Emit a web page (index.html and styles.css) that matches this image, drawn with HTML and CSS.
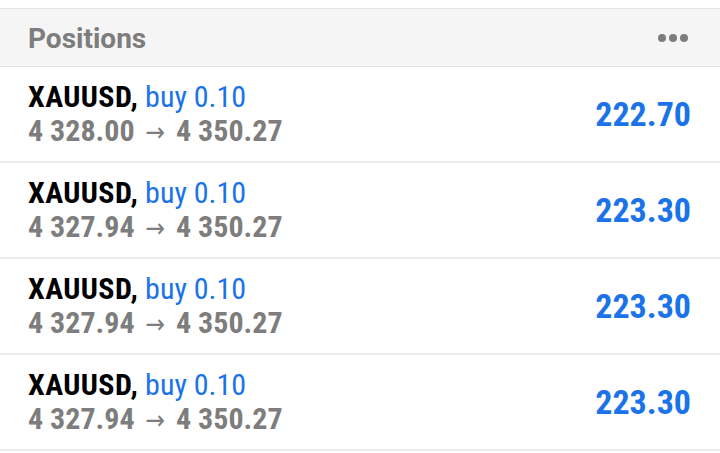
FILE: index.html
```html
<!DOCTYPE html>
<html>
<head>
    <title>Positions</title>
    <link rel="stylesheet" href="styles.css">
</head>
<body>
    <div class="panel">
        <div class="header">
            <span class="title">Positions</span>
            <span class="more"><i></i><i></i><i></i></span>
        </div>

        <div class="row">
            <div class="info">
                <div class="line"><span class="symbol">XAUUSD,</span> <span class="side">buy 0.10</span></div>
                <div class="prices">4 328.00 <span class="arrow">&rarr;</span> 4 350.27</div>
            </div>
            <div class="profit">222.70</div>
        </div>
        <div class="row">
            <div class="info">
                <div class="line"><span class="symbol">XAUUSD,</span> <span class="side">buy 0.10</span></div>
                <div class="prices">4 327.94 <span class="arrow">&rarr;</span> 4 350.27</div>
            </div>
            <div class="profit">223.30</div>
        </div>
        <div class="row">
            <div class="info">
                <div class="line"><span class="symbol">XAUUSD,</span> <span class="side">buy 0.10</span></div>
                <div class="prices">4 327.94 <span class="arrow">&rarr;</span> 4 350.27</div>
            </div>
            <div class="profit">223.30</div>
        </div>
        <div class="row">
            <div class="info">
                <div class="line"><span class="symbol">XAUUSD,</span> <span class="side">buy 0.10</span></div>
                <div class="prices">4 327.94 <span class="arrow">&rarr;</span> 4 350.27</div>
            </div>
            <div class="profit">223.30</div>
        </div>
    </div>
</body>
</html>
```

FILE: styles.css
```css
body {
    margin: 0;
    background: #fff;
    font-family: Roboto, "Liberation Sans", sans-serif;
}
.panel {
    margin-top: 8px;
    border-top: 1px solid #e4e4e4;
}
.header {
    height: 57px;
    background: #f5f5f5;
    border-bottom: 1px solid #e2e2e2;
    padding: 0 32px 0 28px;
    display: flex;
    align-items: center;
    justify-content: space-between;
}
.title {
    font-size: 28px;
    font-weight: bold;
    color: #7d7d7d;
    padding-top: 1px;
}
.more {
    display: flex;
    gap: 3px;
}
.more i {
    width: 8px;
    height: 8px;
    border-radius: 50%;
    background: #7d7d7d;
}
.row {
    height: 94px;
    border-bottom: 2px solid #ebebeb;
    padding: 0 29px 0 28px;
    display: flex;
    align-items: center;
    justify-content: space-between;
    font-family: "Roboto Condensed", "Liberation Sans Narrow", "DejaVu Sans Condensed", Roboto, sans-serif;
}
.info {
    font-size: 30px;
    line-height: 34px;
    padding-top: 1px;
}
.symbol {
    font-weight: bold;
    color: #000;
    letter-spacing: 0.4px;
}
.side {
    color: #1a73e8;
}
.prices {
    font-weight: bold;
    color: #7d7d7d;
}
.arrow {
    font-weight: normal;
    font-size: 26px;
    margin: 0 4px;
}
.profit {
    font-size: 34px;
    font-weight: bold;
    color: #1a73e8;
}
```
